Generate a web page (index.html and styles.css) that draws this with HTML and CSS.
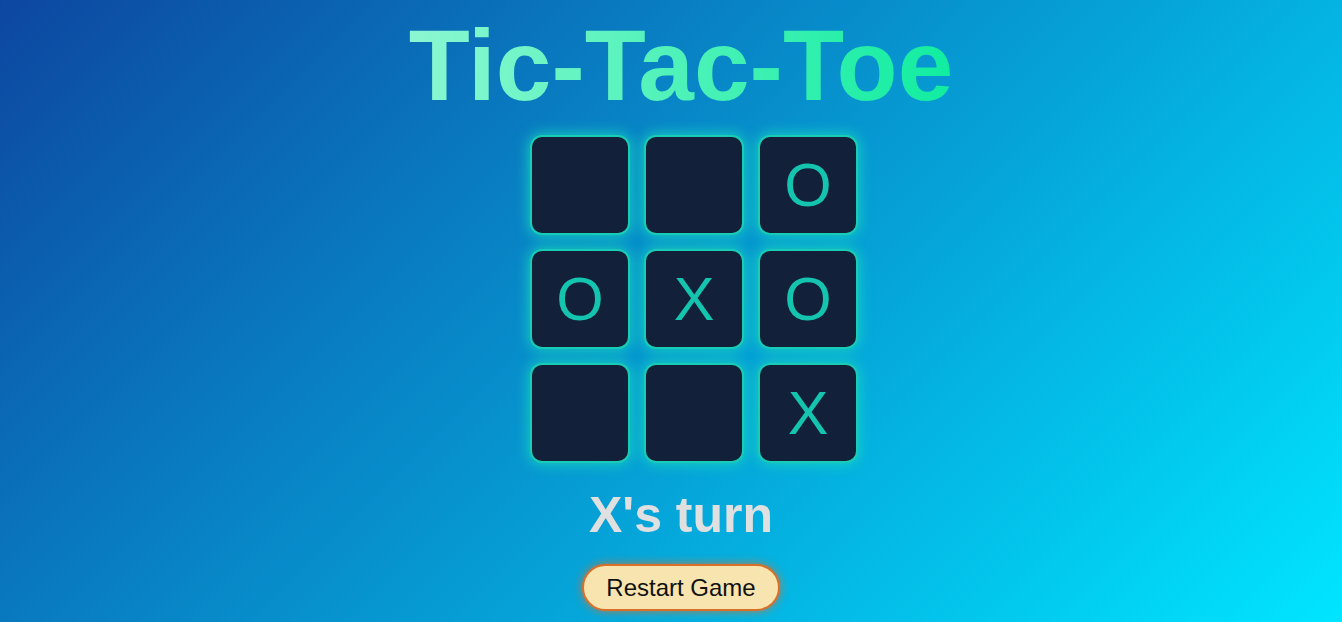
FILE: index.html
```html
<!DOCTYPE html>
<html lang="en">
<head>
<meta charset="utf-8">
<title>Tic-Tac-Toe</title>
<link rel="stylesheet" href="styles.css">
</head>
<body>
<main class="app">
  <h1 class="title">Tic-Tac-Toe</h1>
  <div class="board">
    <div class="cell"></div>
    <div class="cell"></div>
    <div class="cell">O</div>
    <div class="cell">O</div>
    <div class="cell">X</div>
    <div class="cell">O</div>
    <div class="cell"></div>
    <div class="cell"></div>
    <div class="cell">X</div>
  </div>
  <p class="status">X's turn</p>
  <button class="restart">Restart Game</button>
</main>
</body>
</html>
```

FILE: styles.css
```css
html, body {
  margin: 0;
  height: 100%;
}
body {
  background: linear-gradient(135deg, #0d47a1 0%, #00e5ff 100%);
  font-family: "Liberation Sans", Arial, sans-serif;
  overflow: hidden;
}
.app {
  display: flex;
  flex-direction: column;
  align-items: center;
  padding: 8px 0 0 20px;
}
.title {
  margin: 0;
  font-size: 100px;
  font-weight: 700;
  line-height: 115px;
  background: linear-gradient(90deg, #8cf7d2 0%, #10eda0 100%);
  -webkit-background-clip: text;
  background-clip: text;
  color: transparent;
}
.board {
  margin: 12px 0 0 26px;
  display: grid;
  grid-template-columns: repeat(3, 100px);
  grid-auto-rows: 100px;
  gap: 14px;
}
.cell {
  box-sizing: border-box;
  background: #122039;
  border: 2px solid #1accb5;
  border-radius: 12px;
  box-shadow: 0 0 14px 1px rgba(24, 215, 190, 0.9);
  display: flex;
  align-items: center;
  justify-content: center;
  color: #14c4ae;
  font-size: 61px;
  line-height: 1;
}
.status {
  margin: 24px 0 0;
  font-size: 50px;
  font-weight: 700;
  line-height: 57px;
  color: #e0e0e0;
}
.restart {
  margin-top: 20px;
  box-sizing: border-box;
  width: 198px;
  height: 47px;
  background: #f7e4ae;
  border: 2px solid #d8702a;
  border-radius: 24px;
  box-shadow: 0 0 10px rgba(230, 110, 40, 0.8);
  font-family: "Liberation Sans", Arial, sans-serif;
  font-size: 24px;
  color: #111;
  padding: 0;
}
```
